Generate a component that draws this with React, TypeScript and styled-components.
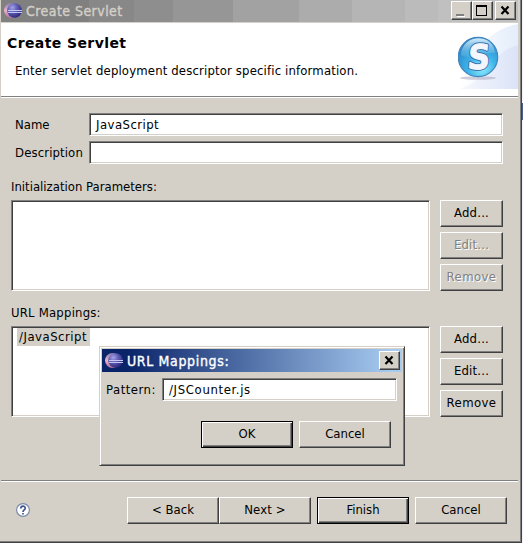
import React from "react";
import styled, { createGlobalStyle, css } from "styled-components";

const Global = createGlobalStyle`
  * { box-sizing: border-box; }
  body { margin: 0; background: #f4f4f8; overflow: hidden; }
`;

const ui = `"DejaVu Sans Condensed", "DejaVu Sans", sans-serif`;

const Screen = styled.div`
  width: 523px;
  height: 543px;
  display: flex;
  font: 13px/18px ${ui};
  font-stretch: condensed;
  color: #000;
`;

const Window = styled.main`
  position: relative;
  width: 522px;
  height: 543px;
  display: flex;
  flex-direction: column;
  background: #d4d0c8;
  border: solid;
  border-width: 0 1px 1px 0;
  border-color: #404040;
  box-shadow: inset -1px -1px #808080;
  padding: 0 3px 0 1px;
`;

const Behind = styled.div`
  width: 1px;
  height: 17px;
  margin-top: 103px;
  background: #4a5d91;
`;

const inactiveBar = `linear-gradient(90deg, #808080 0 88px, #888 88px 133px, #8e8e8e 133px 172px,
  #969696 172px 232px, #a2a2a2 232px 298px, #acacac 298px 351px, #b5b5b5 351px 404px, #bbb 404px 437px, #c0c0c0 437px)`;

const TitleBar = styled.header<{ $active?: boolean }>`
  height: ${p => (p.$active ? 23 : 22)}px;
  display: flex;
  align-items: center;
  gap: 4px;
  padding: 0 2px 0 3px;
  flex: none;
  color: ${p => (p.$active ? "#fff" : "#d4d0c8")};
  background: ${p => (p.$active ? "linear-gradient(90deg, #0a246a 0 25px, #a6caf0 290px)" : inactiveBar)};
`;

const Text = styled.span<{ $ls?: number; $size?: number }>`
  white-space: nowrap;
  letter-spacing: ${p => p.$ls ?? 0}px;
  font-size: ${p => p.$size ?? 13}px;
`;

const Heading = styled.h1`
  margin: 0;
  font: bold 14px/18px "DejaVu Sans", sans-serif;
  font-stretch: normal;
  letter-spacing: 0.4px;
  white-space: nowrap;
`;

const TitleText = styled(Text)`
  flex: 1;
  -webkit-text-stroke: 0.35px currentColor;
`;

const bevel = css`
  background: #d4d0c8;
  border: 1px solid;
  border-color: #fff #404040 #404040 #fff;
  box-shadow: inset -1px -1px #808080;
`;

const WinButtons = styled.div<{ $top: number }>`
  display: flex;
  align-self: flex-start;
  margin-top: ${p => p.$top}px;
`;

const WinButton = styled.button<{ $gap?: number }>`
  ${bevel}
  width: 21px;
  height: 19px;
  padding: 0;
  margin-left: ${p => p.$gap ?? 0}px;
  display: block;
  svg { display: block; }
`;

const Banner = styled.section`
  height: 76px;
  flex: none;
  display: flex;
  justify-content: space-between;
  background: #fff;
  border-top: 1px solid #d4d0c8;
  border-bottom: 1px solid #fff;
  box-shadow: inset 0 -1px #808080;
`;

const BannerText = styled.div`
  display: flex;
  flex-direction: column;
  padding: 11px 0 0 6px;
  gap: 10px;
  & > :last-child { padding-left: 8px; }
`;

const Body = styled.section`
  height: 382px;
  flex: none;
  padding: 15px 15px 0 10px;
`;

const Fields = styled.div`
  display: grid;
  grid-template-columns: 74px 414px;
  grid-auto-rows: 23px;
  row-gap: 5px;
  padding-left: 4px;
  align-items: center;
`;

const Input = styled.div`
  height: 23px;
  background: #fff;
  border: 1px solid;
  border-color: #808080 #fff #fff #808080;
  box-shadow: inset 1px 1px #404040, inset -1px -1px #d4d0c8;
  padding: 2px 6px;
`;

const GroupLabel = styled.div<{ $top: number }>`
  height: 18px;
  margin: ${p => p.$top}px 0 4px;
`;

const Group = styled.div`
  display: flex;
  gap: 10px;
`;

const List = styled.div`
  width: 419px;
  height: 91px;
  flex: none;
  background: #fff;
  border: 1px solid;
  border-color: #808080 #fff #fff #808080;
  box-shadow: inset 1px 1px #404040, inset -1px -1px #d4d0c8;
  padding: 1px 5px;
`;

const Selected = styled.div`
  width: 73px;
  height: 18px;
  padding-left: 2px;
  background: #d4d0c8;
`;

const Column = styled.div`
  display: flex;
  flex-direction: column;
  gap: 5px;
`;

const Button = styled.button<{ $w: number; $default?: boolean }>`
  ${bevel}
  width: ${p => p.$w}px;
  height: 27px;
  flex: none;
  padding: 0 0 1px;
  font: inherit;
  font-stretch: condensed;
  color: #000;
  display: flex;
  align-items: center;
  justify-content: center;
  ${p =>
    p.$default &&
    css`
      border-color: #000;
      box-shadow: inset 1px 1px #fff, inset -1px -1px #404040, inset -2px -2px #808080;
    `}
  &:disabled {
    color: #808080;
    text-shadow: 1px 1px #fff;
  }
`;

const Footer = styled.footer`
  flex: 1;
  display: flex;
  align-items: flex-start;
  border-top: 1px solid #808080;
  box-shadow: inset 0 1px #fff;
  padding: 16px 11px 0 15px;
`;

const Help = styled.div`
  width: 14px;
  height: 14px;
  flex: none;
  margin: 6px 97px 0 0;
  svg { display: block; }
`;

const FooterButtons = styled.div`
  display: flex;
  & > :nth-child(n + 3) { margin-left: 6px; }
`;

const Dialog = styled.section`
  position: absolute;
  left: 99px;
  top: 346px;
  width: 306px;
  height: 120px;
  background: #d4d0c8;
  border: 1px solid;
  border-color: #d4d0c8 #404040 #404040 #d4d0c8;
  box-shadow: inset 1px 1px #fff, inset -1px -1px #808080;
  padding: 2px;
`;

const PatternRow = styled.div`
  display: flex;
  align-items: center;
  justify-content: space-between;
  padding: 6px 5px 0 4px;
  ${Input} { width: 235px; }
`;

const DialogButtons = styled.div`
  display: flex;
  justify-content: flex-end;
  gap: 6px;
  padding: 20px 11px 0 0;
`;

const Eclipse = ({ id }: { id: string }) => (
  <svg width="18" height="18" viewBox="0 0 18 18">
    <defs>
      <radialGradient id={id} cx=".35" cy=".3" r=".75">
        <stop offset="0" stopColor="#a5a3e6" />
        <stop offset=".45" stopColor="#5f5cb4" />
        <stop offset="1" stopColor="#2a2676" />
      </radialGradient>
      <linearGradient id={`${id}-rim`} x1="0" y1="0" x2="0" y2="1">
        <stop offset="0" stopColor="#8f7fae" />
        <stop offset=".5" stopColor="#e9b3c6" />
        <stop offset="1" stopColor="#b2709c" />
      </linearGradient>
    </defs>
    <circle cx="7.500" cy="8.500" r="7.500" fill={`url(#${id}-rim)`} />
    <circle cx="10.500" cy="8.500" r="7.300" fill={`url(#${id})`} />
    <path d="M4 8.500h14M4 10.500h14" stroke="#c3c9f2" />
  </svg>
);

const Close = () => (
  <svg width="19" height="17">
    <path d="M5.500 4.500l7 7.500M12.500 4.500l-7 7.500" stroke="#000" strokeWidth="2.200" />
  </svg>
);

const ServletArt = () => (
  <svg width="60" height="66" viewBox="0 0 60 66">
    <defs>
      <linearGradient id="sky" x1="0" x2="1">
        <stop offset="0" stopColor="#fff" />
        <stop offset="1" stopColor="#e4edfb" />
      </linearGradient>
      <linearGradient id="haze" x1="0" x2="1">
        <stop offset="0" stopColor="#f2f4fc" stopOpacity=".6" />
        <stop offset="1" stopColor="#dbe3f7" />
      </linearGradient>
      <radialGradient id="ball" cx=".6" cy=".8" r=".8">
        <stop offset="0" stopColor="#8cebfd" />
        <stop offset=".45" stopColor="#3db3e8" />
        <stop offset="1" stopColor="#2a80c4" />
      </radialGradient>
      <linearGradient id="gloss" x1="0" y1="0" x2="0" y2="1">
        <stop offset="0" stopColor="#d4eefb" />
        <stop offset="1" stopColor="#67c1ea" stopOpacity=".25" />
      </linearGradient>
    </defs>
    <path d="M2 66C10 35 27 7 60 1v65z" fill="url(#sky)" />
    <path d="M2 66C30 58 34 28 60 22v44z" fill="url(#haze)" />
    <ellipse cx="20" cy="55" rx="18" ry="1.800" fill="#a49fb8" opacity=".5" />
    <circle cx="20" cy="34" r="19.700" fill="url(#ball)" stroke="#4585bd" strokeWidth="1.200" />
    <path d="M3 32C4 10 36 10 37 30C25 28 13 38 3 32z" fill="url(#gloss)" />
    <g transform="translate(4.500 0) skewX(-5)" fontFamily="DejaVu Sans" fontWeight="bold" fontSize="34" textAnchor="middle" strokeLinejoin="round">
      <text x="19.500" y="46.500" fill="#3f72b0" stroke="#3f72b0" strokeWidth="3">S</text>
      <text x="19.500" y="46.500" fill="#f3f6fc" stroke="#f3f6fc" strokeWidth="1">S</text>
    </g>
  </svg>
);

export default function App() {
  return (
    <>
      <Global />
      <Screen>
        <Window>
          <TitleBar>
            <Eclipse id="orb-main" />
            <TitleText $size={14} $ls={0.45}>Create Servlet</TitleText>
            <WinButtons $top={1}>
              <WinButton aria-label="Minimize">
                <svg width="19" height="17" shapeRendering="crispEdges">
                  <path d="M5 14h8v1h-8z" fill="#fff" />
                  <path d="M4 12h8v2h-8z" fill="#808080" />
                </svg>
              </WinButton>
              <WinButton aria-label="Maximize">
                <svg width="19" height="17" shapeRendering="crispEdges">
                  <path d="M3 3h11v11h-11zM4 5v8h9v-8z" fillRule="evenodd" />
                </svg>
              </WinButton>
              <WinButton $gap={2} aria-label="Close"><Close /></WinButton>
            </WinButtons>
          </TitleBar>
          <Banner>
            <BannerText>
              <Heading>Create Servlet</Heading>
              <Text $ls={0.15}>Enter servlet deployment descriptor specific information.</Text>
            </BannerText>
            <ServletArt />
          </Banner>
          <Body>
            <Fields>
              <Text>Name</Text>
              <Input><Text $ls={0.45}>JavaScript</Text></Input>
              <Text $ls={0.12}>Description</Text>
              <Input />
            </Fields>
            <GroupLabel $top={14}><Text>Initialization Parameters:</Text></GroupLabel>
            <Group>
              <List />
              <Column>
                <Button $w={63}><Text $ls={0.2}>Add...</Text></Button>
                <Button $w={63} disabled><Text $ls={0.2}>Edit...</Text></Button>
                <Button $w={63} disabled><Text $ls={0.4}>Remove</Text></Button>
              </Column>
            </Group>
            <GroupLabel $top={13}><Text $ls={0.2}>URL Mappings:</Text></GroupLabel>
            <Group>
              <List><Selected><Text $ls={0.5}>/JavaScript</Text></Selected></List>
              <Column>
                <Button $w={63}><Text $ls={0.2}>Add...</Text></Button>
                <Button $w={63}><Text $ls={0.2}>Edit...</Text></Button>
                <Button $w={63}><Text $ls={0.4}>Remove</Text></Button>
              </Column>
            </Group>
          </Body>
          <Footer>
            <Help>
              <svg width="14" height="14" viewBox="0 0 14 14">
                <circle cx="7" cy="7" r="6.400" fill="#fff" stroke="#7a8ba8" strokeWidth="1.200" />
                <path d="M4.800 5.500C4.800 2.500 9.200 2.500 9.200 5.200C9.200 7 7 6.800 7 9M7 10v1.500" fill="none" stroke="#3f568e" strokeWidth="1.700" />
              </svg>
            </Help>
            <FooterButtons>
              <Button $w={92}><Text>&lt; Back</Text></Button>
              <Button $w={92}><Text $ls={0.15}>Next &gt;</Text></Button>
              <Button $w={92} $default><Text>Finish</Text></Button>
              <Button $w={92}><Text>Cancel</Text></Button>
            </FooterButtons>
          </Footer>
          <Dialog>
            <TitleBar $active>
              <Eclipse id="orb-dialog" />
              <TitleText $size={14} $ls={0.65}>URL Mappings:</TitleText>
              <WinButtons $top={2}><WinButton aria-label="Close"><Close /></WinButton></WinButtons>
            </TitleBar>
            <PatternRow>
              <Text $ls={0.5}>Pattern:</Text>
              <Input><Text $ls={0.65}>/JSCounter.js</Text></Input>
            </PatternRow>
            <DialogButtons>
              <Button $w={92} $default><Text>OK</Text></Button>
              <Button $w={92}><Text>Cancel</Text></Button>
            </DialogButtons>
          </Dialog>
        </Window>
        <Behind />
      </Screen>
    </>
  );
}
